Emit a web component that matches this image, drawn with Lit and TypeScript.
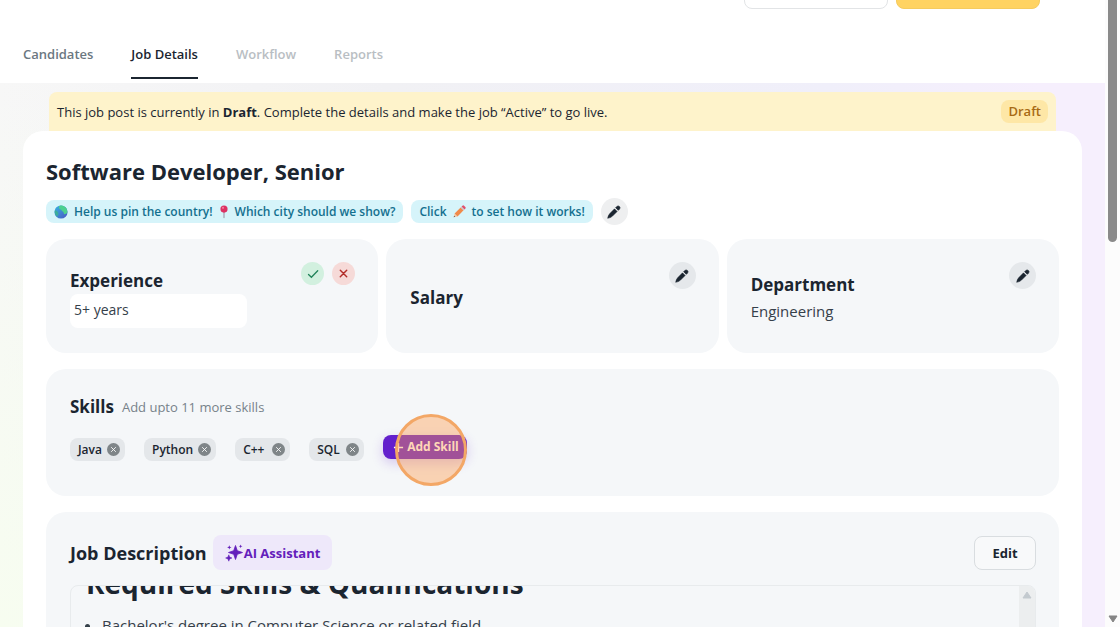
import { LitElement, html, css, svg } from "lit";
import { customElement } from "lit/decorators.js";

const pencil = html`<svg class="ico" viewBox="0 0 16 16" width="14" height="14" aria-hidden="true">
  <path d="M.8 15.200C1.200 12.800 1.900 11.100 3.300 9.700L8.600 4.400 11.600 7.400 6.300 12.700C4.900 14.100 3.200 14.800.8 15.200Z" stroke="currentColor" stroke-width=".6" stroke-linejoin="round" />
  <path d="M9.900 3.100 11.200 1.800a2.100 2.100 0 0 1 3 3L12.900 6.100Z" stroke="currentColor" stroke-width=".8" stroke-linejoin="round" />
</svg>`;

const globe = html`<svg viewBox="0 0 16 16" width="14" height="14" aria-hidden="true">
  <defs><linearGradient id="sea" x1="0" y1="0" x2="1" y2="1"><stop offset="0" stop-color="#37b6e0" /><stop offset="1" stop-color="#4a56c4" /></linearGradient></defs>
  <circle cx="8" cy="8" r="7.5" fill="url(#sea)" />
  <path d="M6 1C9-.2 12 .8 13.800 3.400 15 5 15.600 7.600 15 9.500c-1.200-.5-1.600 1.500-3 1-1.300-.6-.6-2.500-2-3.200-1.500-.8-1.300-2-2.600-2.300C6.200 4.600 5 3 6 1Z" fill="#4cd08f" />
  <path d="M1 6c1.800.2 3.500 1.500 4 3.500.4 1.500-1 2.500-1.300 3.800C1.400 11.500.3 8.800 1 6Z" fill="#3cae9a" />
</svg>`;

const pin = html`<svg viewBox="0 0 12 16" width="10" height="14" aria-hidden="true">
  <rect x="5.200" y="7" width="1.600" height="8.500" rx=".8" fill="#a9a3b4" />
  <circle cx="6" cy="4.500" r="4.300" fill="#dc3263" />
  <circle cx="4.800" cy="3" r="1.300" fill="#f27f9b" />
</svg>`;

const crayon = html`<svg viewBox="0 0 16 16" width="13" height="13" aria-hidden="true">
  <path d="M.8 15.200 2 10.400 5.600 14Z" fill="#f6c7a0" />
  <path d="M.8 15.200 1.400 13.300 2.700 14.600Z" fill="#5b4a55" />
  <path d="M2 10.400 9.400 3 13 6.600 5.600 14Z" fill="#f08a4b" />
  <path d="M9.400 3 10.600 1.800 14.200 5.400 13 6.600Z" fill="#c9c6d4" />
  <path d="M10.600 1.800 11.600.8a1.500 1.500 0 0 1 2 0L15.200 2.400a1.500 1.500 0 0 1 0 2L14.200 5.400Z" fill="#e0506b" />
</svg>`;

const sparkles = html`<svg viewBox="0 0 18 18" width="18" height="18" fill="currentColor" aria-hidden="true">
  <path d="M10.500 1.500 12.300 6.700 17.500 8.500 12.300 10.300 10.500 15.500 8.700 10.300 3.500 8.500 8.700 6.700Z" stroke="currentColor" stroke-width=".8" stroke-linejoin="round" />
  <path d="M3.800 10.800 4.700 13.100 7 14 4.700 14.900 3.800 17.200 2.900 14.900.6 14 2.900 13.100Z" stroke="currentColor" stroke-width=".5" />
  <path d="M4.300 1.200 4.900 2.800 6.500 3.400 4.900 4 4.300 5.600 3.700 4 2.100 3.400 3.700 2.800Z" />
  <path d="M15.600.4 16.100 1.800 17.500 2.300 16.100 2.800 15.600 4.200 15.100 2.800 13.700 2.300 15.100 1.800Z" />
</svg>`;

const cross = svg`<path d="M2.500 2.500 9.500 9.500M9.500 2.500 2.500 9.500" stroke="currentColor" stroke-linecap="round" />`;

@customElement("app-root")
export class AppRoot extends LitElement {
  static styles = css`
    :host {
      display: flex;
      height: 100vh;
      overflow: hidden;
      font-family: "Open Sans", "Noto Sans", sans-serif;
      font-size: 13px;
      line-height: 20px;
      color: #1b2530;
      background: #fcfcfc;
    }
    * { box-sizing: border-box; }
    button, input { font: inherit; color: inherit; border: 0; margin: 0; padding: 0; background: none; }
    h1, h2, p, ul { margin: 0; padding: 0; }
    svg { display: block; flex: none; }
    .ico { fill: currentColor; }

    .page { flex: 1; min-width: 0; display: flex; flex-direction: column; }
    header { flex: none; background: #fff; height: 83px; overflow: hidden; }
    .actions { display: flex; justify-content: flex-end; gap: 8px; margin-top: -27px; padding-right: 65px; }
    .action { width: 144px; height: 36px; border-radius: 8px; border: 1px solid #e2e4e6; background: #fff; }
    .action.main { background: #ffd362; border-color: #f5cb5f; }
    nav { display: flex; gap: 38px; padding: 35px 23px 0; }
    nav a { font-weight: 600; color: #6b7781; text-decoration: none; height: 35px; border-bottom: 2px solid transparent; }
    nav a.on { color: #1b2530; border-color: #1b2530; }
    nav a.off { color: #b9bec3; }

    .body {
      flex: 1; min-height: 0; padding: 9px 23px 0; display: flex; flex-direction: column;
      background:
        radial-gradient(circle at 0 100%, #f7fdf0, transparent 45%),
        linear-gradient(90deg, #f7f7f7, #f1f1f4 35%, #f0effa 75%, #f6effd 94%);
    }
    .banner {
      margin: 0 26px; height: 39px; padding: 0 8px; display: flex; align-items: center; justify-content: space-between;
      background: #fef3cb; border-radius: 8px 8px 0 0;
    }
    .state { background: #fee7a6; color: #a86a14; font-weight: 600; border-radius: 8px; line-height: 23px; padding: 0 7px; }
    .sheet { flex: 1; min-height: 0; background: #fff; border-radius: 20px 20px 0 0; padding: 25px 23px 0; }
    h1 { font-size: 22px; line-height: 30px; font-weight: 700; }
    .tags { display: flex; align-items: center; gap: 8px; margin: 14px 0 16px; }
    .tag { display: flex; align-items: center; gap: 6px; height: 23px; padding: 0 8px; border-radius: 8px; background: #d6f4fa; color: #14708f; font-weight: 600; font-size: 12px; }
    .round { width: 27px; height: 27px; border-radius: 50%; background: #e5e8eb; display: grid; place-items: center; flex: none; }
    .tags .round { background: #eeeff0; margin: -2px 0; }

    .cards { display: grid; grid-template-columns: repeat(3, 1fr); gap: 8px; }
    .card { background: #f5f7f9; border-radius: 20px; padding: 23px 23px 23px 24px; }
    .cards .card { height: 114px; display: flex; justify-content: space-between; }
    .info { align-self: center; display: flex; flex-direction: column; padding-top: 4px; }
    h2, .label { font-size: 17px; line-height: 26px; font-weight: 700; }
    .value { font-size: 15px; line-height: 26px; color: #35404a; }
    .field { width: 177px; height: 34px; background: #fff; border-radius: 8px; padding: 0 4px 4px; font-size: 14px; color: #35404a; }
    .pair { display: flex; gap: 8px; }
    .mini { width: 23px; height: 23px; border-radius: 50%; display: grid; place-items: center; }
    .ok { background: #d2f0df; color: #22835a; }
    .no { background: #f6dad8; color: #b32e2a; }

    .skills { margin-top: 16px; height: 127px; padding-top: 25px; }
    .heading { display: flex; align-items: center; gap: 8px; }
    .hint { color: #77828a; }
    .chips { display: flex; gap: 19px; margin-top: 15px; }
    .chip { display: flex; align-items: center; justify-content: space-between; gap: 5px; min-width: 55px; height: 23px; margin-top: 3px; padding: 0 5px 0 8px; border-radius: 8px; background: #e4e7ea; font-weight: 600; font-size: 12px; }
    .del { width: 13px; height: 13px; border-radius: 50%; background: #7f8588; color: #fff; display: grid; place-items: center; }
    .add-wrap { position: relative; }
    .add { display: flex; align-items: center; gap: 3px; height: 24px; padding: 0 8px 0 10px; border-radius: 8px; background: #6320cc; color: #fff; font-weight: 700; font-size: 12px; box-shadow: 0 4px 12px #6320cc38; white-space: nowrap; }
    .tap { position: absolute; left: 50%; top: 50%; width: 72px; height: 72px; margin: -34px 0 0 -30px; border-radius: 50%; border: 3px solid #f3a766; background: #ff9a4a66; pointer-events: none; }

    .desc { margin-top: 16px; }
    .bar { display: flex; align-items: center; gap: 6px; }
    .bar h2 { font-size: 18px; }
    .ai { display: flex; align-items: center; height: 35px; padding: 0 12px; gap: 1px; border-radius: 8px; background: #eee8fa; color: #6320bb; font-weight: 700; }
    .edit { margin-left: auto; width: 62px; height: 34px; border-radius: 8px; border: 1px solid #d9dde0; background: #f8f9fa; font-weight: 700; }
    .editor { margin-top: 15px; height: 200px; border: 1px solid #e8ebed; border-radius: 8px; overflow: hidden; display: flex; justify-content: space-between; }
    .doc { padding-left: 15px; margin-top: -23px; }
    .doc h2 { font-size: 28px; line-height: 40px; }
    .doc ul { padding-left: 16px; margin-top: 10px; font-size: 15px; line-height: 24px; color: #35404a; }
    .rail { width: 16px; background: #eceeef; padding-top: 5px; display: flex; justify-content: center; }

    .scroll { width: 15px; flex: none; display: flex; flex-direction: column; align-items: center; justify-content: space-between; padding-bottom: 4px; }
    .thumb { width: 9px; height: 242px; background: #8a8a8a; border-radius: 0 0 5px 5px; }
  `;

  private chip(name: string) {
    return html`<span class="chip">${name}
      <button class="del" aria-label="Remove ${name}"><svg viewBox="0 0 12 12" width="7" height="7" stroke-width="1.500">${cross}</svg></button>
    </span>`;
  }

  render() {
    return html`
      <div class="page">
        <header>
          <div class="actions">
            <button class="action" aria-label="Preview"></button>
            <button class="action main" aria-label="Publish"></button>
          </div>
          <nav>
            <a href="#candidates">Candidates</a>
            <a href="#details" class="on" aria-current="page">Job Details</a>
            <a href="#workflow" class="off">Workflow</a>
            <a href="#reports" class="off">Reports</a>
          </nav>
        </header>
        <div class="body">
          <div class="banner">
            <span>This job post is currently in <b>Draft</b>. Complete the details and make the job “Active” to go live.</span>
            <span class="state">Draft</span>
          </div>
          <main class="sheet">
            <h1>Software Developer, Senior</h1>
            <div class="tags">
              <span class="tag">${globe}<span>Help us pin the country!</span>${pin}<span>Which city should we show?</span></span>
              <span class="tag"><span>Click</span>${crayon}<span>to set how it works!</span></span>
              <button class="round" aria-label="Edit location">${pencil}</button>
            </div>
            <div class="cards">
              <section class="card">
                <div class="info">
                  <label class="label" for="experience">Experience</label>
                  <input class="field" id="experience" value="5+ years" />
                </div>
                <div class="pair">
                  <button class="mini ok" aria-label="Save"><svg viewBox="0 0 12 12" width="12" height="12"><path d="M1.500 6.500 4.400 9.300 10.700 2.800" fill="none" stroke="currentColor" stroke-width="1.300" stroke-linecap="round" /></svg></button>
                  <button class="mini no" aria-label="Cancel"><svg viewBox="0 0 12 12" width="11" height="11" stroke-width="1.600">${cross}</svg></button>
                </div>
              </section>
              <section class="card">
                <div class="info"><h2>Salary</h2></div>
                <button class="round" aria-label="Edit salary">${pencil}</button>
              </section>
              <section class="card">
                <div class="info"><h2>Department</h2><p class="value">Engineering</p></div>
                <button class="round" aria-label="Edit department">${pencil}</button>
              </section>
            </div>
            <section class="card skills">
              <div class="heading"><h2>Skills</h2><span class="hint">Add upto 11 more skills</span></div>
              <div class="chips">
                ${["Java", "Python", "C++", "SQL"].map((s) => this.chip(s))}
                <div class="add-wrap">
                  <button class="add"><svg viewBox="0 0 12 12" width="11" height="11"><path d="M6 1V11M1 6H11" stroke="currentColor" stroke-width="1.500" /></svg>Add Skill</button>
                  <span class="tap"></span>
                </div>
              </div>
            </section>
            <section class="card desc">
              <div class="bar">
                <h2>Job Description</h2>
                <button class="ai">${sparkles}AI Assistant</button>
                <button class="edit">Edit</button>
              </div>
              <div class="editor">
                <div class="doc">
                  <h2>Required Skills &amp; Qualifications</h2>
                  <ul><li>Bachelor's degree in Computer Science or related field</li></ul>
                </div>
                <div class="rail"><svg viewBox="0 0 10 8" width="10" height="8"><path d="M5 1 9 7H1Z" fill="#c3cacf" stroke="#c3cacf" stroke-linejoin="round" /></svg></div>
              </div>
            </section>
          </main>
        </div>
      </div>
      <div class="scroll" aria-hidden="true">
        <div class="thumb"></div>
        <svg viewBox="0 0 10 8" width="10" height="8"><path d="M5 7 9 1H1Z" fill="#858585" stroke="#858585" stroke-linejoin="round" /></svg>
      </div>
    `;
  }
}
